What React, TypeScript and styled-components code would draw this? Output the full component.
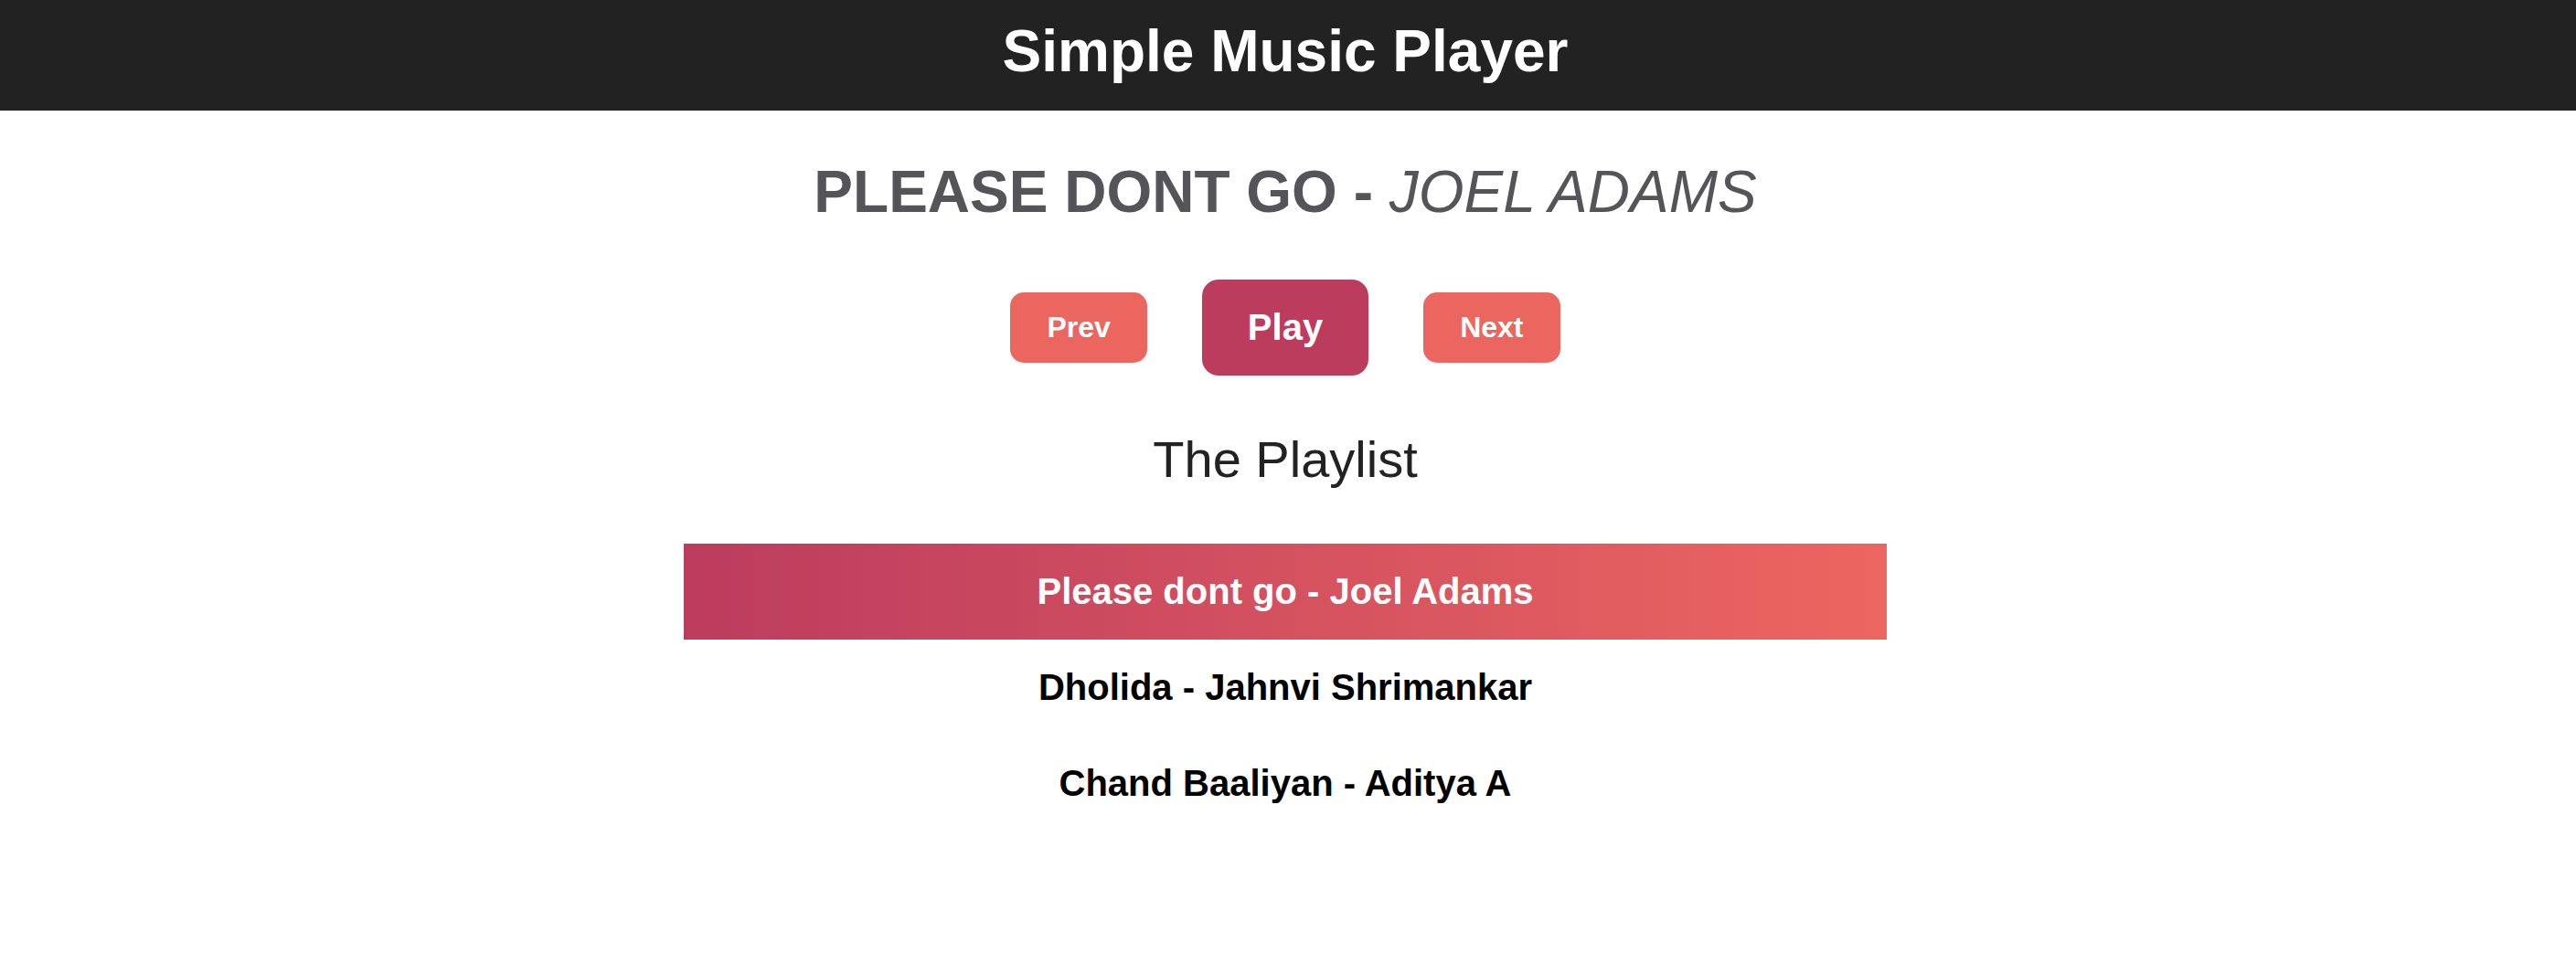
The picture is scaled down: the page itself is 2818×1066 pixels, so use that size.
import React from "react";
import styled, { createGlobalStyle } from "styled-components";

const GlobalStyle = createGlobalStyle`
  html, body {
    margin: 0;
    padding: 0;
    background: #ffffff;
    font-family: "Liberation Sans", Arial, Helvetica, sans-serif;
  }
  * { box-sizing: border-box; }
`;

const Header = styled.header`
  height: 121px;
  background: #222222;
  display: flex;
  justify-content: center;
  padding: 19px 6px 0 0;
`;

const HeaderTitle = styled.h1`
  margin: 0;
  color: #ffffff;
  font-size: 64px;
  font-weight: 700;
  line-height: 74px;
`;

const Main = styled.main`
  display: flex;
  flex-direction: column;
  align-items: center;
  padding-right: 6px;
`;

const NowPlaying = styled.h2`
  margin: 52px 0 59px;
  color: #555559;
  font-size: 64px;
  font-weight: 700;
  line-height: 74px;
  text-transform: uppercase;
  white-space: nowrap;
`;

const Artist = styled.span`
  font-style: italic;
  font-weight: 400;
`;

const Controls = styled.div`
  display: flex;
  align-items: center;
  gap: 60px;
  margin-bottom: 60px;
`;

const ControlButton = styled.button<{ $primary?: boolean }>`
  border: none;
  cursor: pointer;
  color: #ffffff;
  font-family: "Liberation Sans", Arial, Helvetica, sans-serif;
  font-weight: 700;
  background: ${(p) => (p.$primary ? "#bc3c5e" : "#ec6660")};
  font-size: ${(p) => (p.$primary ? "40px" : "32px")};
  line-height: ${(p) => (p.$primary ? "45px" : "37px")};
  padding: ${(p) => (p.$primary ? "30px 50px" : "20px 40px")};
  border-radius: ${(p) => (p.$primary ? "18px" : "15px")};
`;

const PlaylistHeading = styled.h3`
  margin: 0 0 60px;
  color: #222222;
  font-size: 56px;
  font-weight: 400;
  line-height: 64px;
`;

const List = styled.ul`
  list-style: none;
  margin: 0;
  padding: 0;
  width: 1316px;
  display: flex;
  flex-direction: column;
`;

const Track = styled.li<{ $active?: boolean }>`
  height: 105px;
  display: flex;
  align-items: center;
  justify-content: center;
  font-size: 40px;
  font-weight: 700;
  line-height: 45px;
  color: ${(p) => (p.$active ? "#ffffff" : "#000000")};
  background: ${(p) =>
    p.$active ? "linear-gradient(to right, #bc3c5e, #ec6660)" : "transparent"};
`;

const tracks = [
  { title: "Please dont go", artist: "Joel Adams" },
  { title: "Dholida", artist: "Jahnvi Shrimankar" },
  { title: "Chand Baaliyan", artist: "Aditya A" },
];

export default function App() {
  const current = 0;
  return (
    <>
      <GlobalStyle />
      <Header>
        <HeaderTitle>Simple Music Player</HeaderTitle>
      </Header>
      <Main>
        <NowPlaying>
          {tracks[current].title} - <Artist>{tracks[current].artist}</Artist>
        </NowPlaying>
        <Controls>
          <ControlButton>Prev</ControlButton>
          <ControlButton $primary>Play</ControlButton>
          <ControlButton>Next</ControlButton>
        </Controls>
        <PlaylistHeading>The Playlist</PlaylistHeading>
        <List>
          {tracks.map((t, i) => (
            <Track key={t.title} $active={i === current}>
              {t.title} - {t.artist}
            </Track>
          ))}
        </List>
      </Main>
    </>
  );
}
